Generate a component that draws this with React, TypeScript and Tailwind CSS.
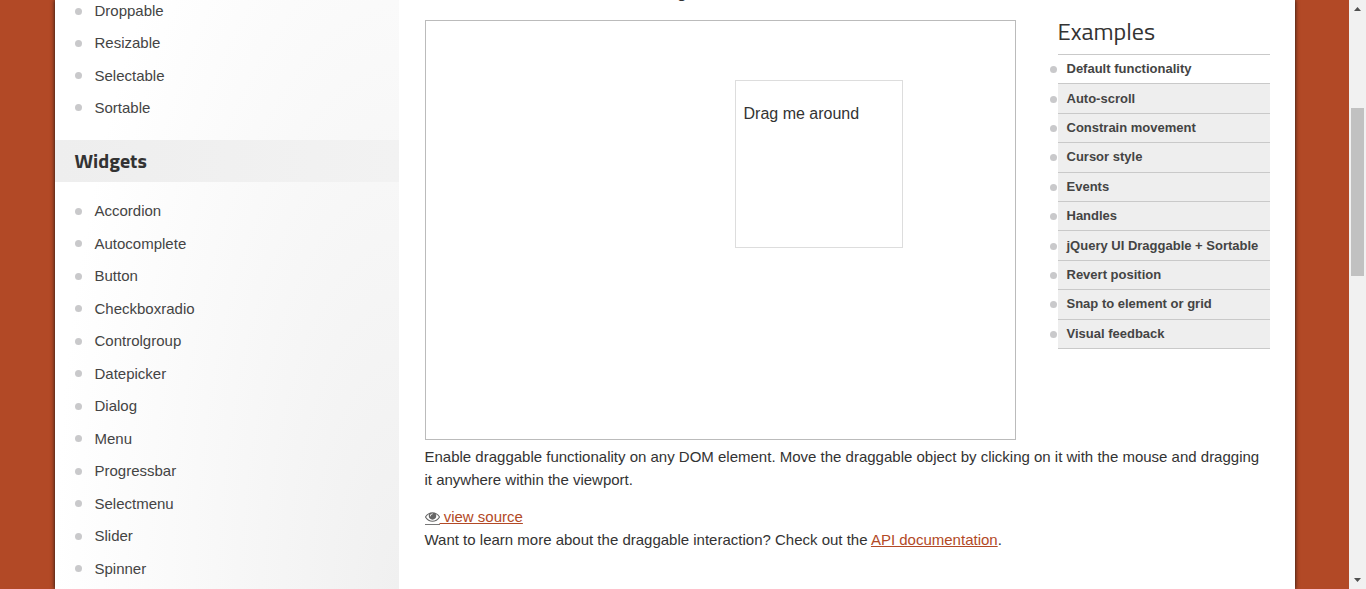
import React from "react";

const interactions = ["Droppable", "Resizable", "Selectable", "Sortable"];

const widgets = [
  "Accordion",
  "Autocomplete",
  "Button",
  "Checkboxradio",
  "Controlgroup",
  "Datepicker",
  "Dialog",
  "Menu",
  "Progressbar",
  "Selectmenu",
  "Slider",
  "Spinner",
];

const examples = [
  "Default functionality",
  "Auto-scroll",
  "Constrain movement",
  "Cursor style",
  "Events",
  "Handles",
  "jQuery UI Draggable + Sortable",
  "Revert position",
  "Snap to element or grid",
  "Visual feedback",
];

function Bullet() {
  return <span aria-hidden="true" className="size-[7px] shrink-0 rounded-full bg-[#c9c9cb]" />;
}

function SideItem({ label }: { label: string }) {
  return (
    <li className="flex items-center gap-[13px] pl-5">
      <Bullet />
      <a href="#" className="text-[15px] leading-6 text-[#444]">
        {label}
      </a>
    </li>
  );
}

function EyeIcon() {
  return (
    <svg
      viewBox="0 0 1792 1792"
      className="box-content inline-block size-[15px] border-b border-[#777] align-[-3px] text-[#666]"
      fill="currentColor"
      aria-hidden="true"
    >
      <path d="M1664 960q-152-236-381-353 61 104 61 225 0 185-131.5 316.5t-316.5 131.5-316.5-131.5-131.5-316.5q0-121 61-225-229 117-381 353 133 205 333.5 326.5t434.5 121.5 434.5-121.5 333.5-326.5zm-720-384q0-20-14-34t-34-14q-125 0-214.5 89.5t-89.500 214.5q0 20 14 34t34 14 34-14 14-34q0-86 61-147t147-61q20 0 34-14t14-34zm848 384q0 34-20 69-140 230-376.5 368.5t-499.5 138.5-499.5-139-376.5-368q-20-35-20-69t20-69q140-229 376.5-368t499.5-139 499.5 139 376.5 368q20 35 20 69z" />
    </svg>
  );
}

function Sidebar() {
  return (
    <aside className="w-[344px] shrink-0 bg-[radial-gradient(100%_150%_at_100%_100%,#f0f0f0,#ffffff)]">
      <nav aria-label="Interactions">
        <ul className="-mt-[5px] grid h-[129px] auto-rows-fr">
          {interactions.map((item) => (
            <SideItem key={item} label={item} />
          ))}
        </ul>
      </nav>
      <h3 className="mt-4 flex h-[42px] items-center bg-linear-to-r from-[#eeeeee] to-[#f2f2f2] pb-[2px] pl-5 font-['Titillium_Web','Open_Sans',sans-serif] text-[20px] font-bold text-[#333]">
        Widgets
      </h3>
      <nav aria-label="Widgets">
        <ul className="mt-[13px] grid h-[390px] auto-rows-fr">
          {widgets.map((item) => (
            <SideItem key={item} label={item} />
          ))}
        </ul>
      </nav>
    </aside>
  );
}

function Examples() {
  return (
    <aside className="w-[212px] shrink-0">
      <h2 className="flex h-[34px] items-center pb-[11px] font-['Titillium_Web',Roboto,sans-serif] text-[24px] font-normal text-[#333]">
        Examples
      </h2>
      <ul className="grid h-[295px] auto-rows-fr border-t border-[#c9c9c9]">
        {examples.map((item, i) => (
          <li key={item} className="-ml-2 flex">
            <span className="flex w-2 items-center">
              <Bullet />
            </span>
            <a
              href="#"
              className={
                "flex flex-1 items-center border-b border-[#c9c9c9] pb-px pl-[9px] text-[13px] font-bold whitespace-nowrap text-[#444] " +
                (i === 0 ? "bg-white" : "bg-[#eeeeee]")
              }
            >
              {item}
            </a>
          </li>
        ))}
      </ul>
    </aside>
  );
}

function ScrollRail() {
  return (
    <div aria-hidden="true" className="flex w-[17px] shrink-0 flex-col items-center bg-[#f1f1f1]">
      <svg viewBox="0 0 17 17" className="size-[17px] shrink-0" fill="#505050">
        <path d="M5 11h7L8.500 7z" />
      </svg>
      <div className="flex w-[13px] flex-1 flex-col">
        <div className="flex-[91]" />
        <div className="flex-[168] bg-[#c1c1c1]" />
        <div className="flex-[296]" />
      </div>
      <svg viewBox="0 0 17 17" className="size-[17px] shrink-0" fill="#505050">
        <path d="M5 6h7L8.500 10z" />
      </svg>
    </div>
  );
}

export default function App() {
  return (
    <div className="flex h-screen overflow-hidden bg-[#b24926] font-['Liberation_Sans',Arial,sans-serif] text-[15px] leading-[23px] text-[#333]">
      <div className="min-w-0 flex-1">
        <div className="mx-auto flex min-h-full max-w-[1240px] bg-white shadow-[0_0_4px_#111]">
          <Sidebar />
          <main className="min-w-0 flex-1 pr-[25px] pl-[26px]">
            <div className="h-5 overflow-hidden">
              <p className="-mt-[17px] text-[16px] leading-5 font-bold">Allow elements to be moved using the mouse.</p>
            </div>
            <div className="flex gap-[42px]">
              <div className="relative h-[420px] flex-1 border border-[#bbb]">
                <div className="absolute top-[59px] left-[309px] size-[168px] border border-[#ddd] px-2 pt-[21px] text-[16px] leading-6">
                  <p>Drag me around</p>
                </div>
              </div>
              <Examples />
            </div>
            <p className="mt-[5px]">
              Enable draggable functionality on any DOM element. Move the draggable object by clicking on it with the mouse
              and dragging it anywhere within the viewport.
            </p>
            <div className="mt-[14px]">
              <a href="#" className="text-[#b24926] underline">
                <EyeIcon /> view source
              </a>
            </div>
            <p>
              Want to learn more about the draggable interaction? Check out the{" "}
              <a href="#" className="text-[#b24926] underline">
                API documentation
              </a>
              .
            </p>
          </main>
        </div>
      </div>
      <ScrollRail />
    </div>
  );
}
